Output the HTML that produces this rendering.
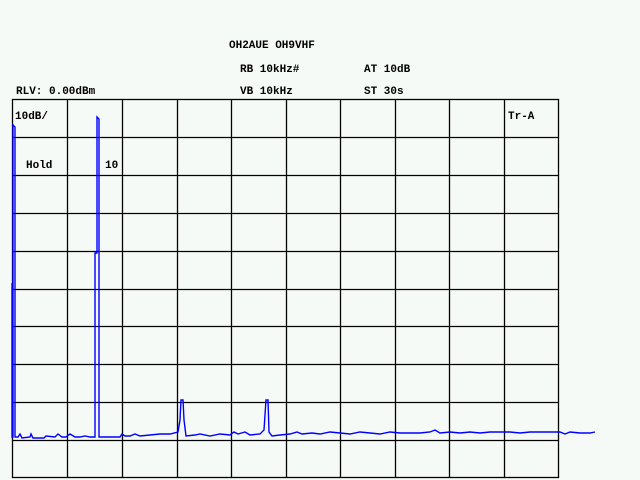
<html><body style="margin:0;background:#f6faf6;width:640px;height:480px;overflow:hidden">
<svg width="640" height="480" style="position:absolute;left:0;top:0" font-family="Liberation Mono, monospace" font-weight="bold" font-size="11">
<rect width="640" height="480" fill="#f6faf6"/>
<g stroke="#000" stroke-width="1.3" fill="none">
<rect x="12.5" y="99.5" width="546" height="378"/>
<path d="M67.5 99V478M122.5 99V478M177.5 99V478M231.5 99V478M286.5 99V478M340.5 99V478M395.5 99V478M449.5 99V478M504.5 99V478
M12 137.5H559M12 175.5H559M12 213.5H559M12 251.5H559M12 289.5H559M12 326.5H559M12 364.5H559M12 402.5H559M12 440.5H559"/>
</g>
<g fill="#000">
<text x="229" y="48">OH2AUE OH9VHF</text>
<text x="240" y="72">RB 10kHz#</text>
<text x="364" y="72">AT 10dB</text>
<text x="16" y="94">RLV: 0.00dBm</text>
<text x="240" y="94">VB 10kHz</text>
<text x="364" y="94">ST 30s</text>
<text x="15" y="119">10dB/</text>
<text x="26" y="168">Hold</text>
<text x="105" y="168">10</text>
<text x="508" y="119">Tr-A</text>
</g>
<polyline fill="none" stroke="#0000ff" stroke-width="1.4" points="12,283 12,437 13,437 13,125 15,127 15,437 18,437 20,434 22,438 30,437 31,434 33,438 44,438 46,436 55,437 58,434 62,437 66,437 70,434 75,437 80,437 85,436 90,437 95,437 95,253 97,253 97,117 99,119 99,437 120,437 122,434 125,436 130,436 135,434 140,436 150,435 160,434 170,434 178,432 180,420 181,400 183,400 184,420 186,436 195,435 200,434 210,436 220,434 230,435 234,432 238,434 245,432 250,435 260,434 264,430 266,400 268,400 269,432 272,436 280,435 290,434 297,432 302,434 312,433 320,434 330,432 340,433 350,434 360,432 370,433 380,434 390,432 400,433 410,433 420,433 430,432 435,430 440,433 450,432 460,433 470,432 480,433 490,432 500,432 510,432 520,433 530,432 540,432 550,432 560,432 565,434 570,432 580,433 590,433 595,432"/>
</svg>
</body></html>
